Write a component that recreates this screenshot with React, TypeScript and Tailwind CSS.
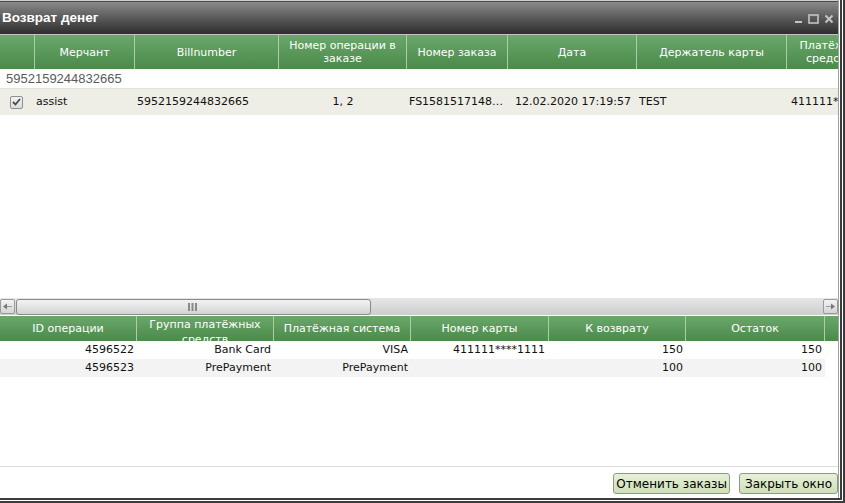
import React from "react";

const upperCols = [
    {title: "", w: "w-[35px]"},
    {title: "Мерчант", w: "w-[100px]"},
    {title: "Billnumber", w: "w-[144px]"},
    {title: "Номер операции в заказе", w: "w-[128px]"},
    {title: "Номер заказа", w: "w-[101px]"},
    {title: "Дата", w: "w-[129px]"},
    {title: "Держатель карты", w: "w-[150px]"},
    {title: "Платёжное средство", w: "w-[92px]"},
];

const lowerCols = [
    {title: "ID операции", w: "w-[137px]"},
    {title: "Группа платёжных средств", w: "w-[137px]"},
    {title: "Платёжная система", w: "w-[137px]"},
    {title: "Номер карты", w: "w-[138px]"},
    {title: "К возврату", w: "w-[137px]"},
    {title: "Остаток", w: "w-[139px]"},
];

const payments = [
    {id: "4596522", group: "Bank Card", system: "VISA", card: "411111****1111", refund: "150", rest: "150"},
    {id: "4596523", group: "PrePayment", system: "PrePayment", card: "", refund: "100", rest: "100"},
];

const HeaderCell = ({title, w, h}: { title: string; w: string; h: string }) => (
    <div
        className={`${w} ${h} shrink-0 flex items-center justify-center overflow-hidden border-r border-[#a9cfa9] px-1 text-center text-[11px] leading-[13px] text-white`}>
        <span>{title}</span>
    </div>
);

const Arrow = ({dir}: { dir: "left" | "right" }) => (
    <div
        className="w-[15px] h-[15px] shrink-0 rounded-[2px] border border-[#9a9a9a] bg-gradient-to-b from-[#f4f4f4] to-[#d4d4d4] flex items-center justify-center">
        <svg width="11" height="7" viewBox="0 0 11 7">
            {dir === "left" ? (
                <>
                    <path d="M1 3.5 L5 0.5 L5 6.5 Z" fill="#777"/>
                    <path d="M5 3.5 H10" stroke="#999" strokeWidth="1"/>
                </>
            ) : (
                <>
                    <path d="M10 3.5 L6 0.5 L6 6.5 Z" fill="#777"/>
                    <path d="M1 3.5 H6" stroke="#999" strokeWidth="1"/>
                </>
            )}
        </svg>
    </div>
);

const App = () => {
    return (
        <div
            className="w-[845px] h-[503px] overflow-hidden bg-white border-r-[5px] border-b-[5px] border-double border-[#3c3c3c] flex"
            style={{fontFamily: '"DejaVu Sans", Verdana, sans-serif'}}>
            <div className="w-[839px] h-full border-r border-[#a0a0a0] flex flex-col overflow-hidden">
                {/* title bar */}
                <div className="h-[35px] shrink-0 border-t border-[#cfcfcf] border-b border-b-[#c4c4c4]">
                    <div
                        className="h-full border-t border-[#4a4a4a] bg-gradient-to-b from-[#8a8a8a] via-[#5a5a5a] to-[#2e2e2e] flex items-center justify-between pl-[2px] pr-[4px]">
                        <span className="text-[13.5px] font-bold text-white"
                              style={{fontFamily: '"Liberation Sans", Arial, sans-serif'}}>Возврат денег</span>
                        <div className="flex items-center gap-[5px] pt-[1px]">
                            <svg width="9" height="10" viewBox="0 0 9 10">
                                <rect x="1" y="7" width="7" height="2" fill="#c4c4c4"/>
                            </svg>
                            <svg width="11" height="10" viewBox="0 0 11 10">
                                <rect x="1" y="1" width="9" height="8" fill="none" stroke="#c4c4c4" strokeWidth="1.6"/>
                            </svg>
                            <svg width="10" height="10" viewBox="0 0 10 10">
                                <path d="M1.5 1.5 L8.5 8.5 M8.5 1.5 L1.5 8.5" stroke="#c4c4c4" strokeWidth="2"/>
                            </svg>
                        </div>
                    </div>
                </div>

                {/* upper grid header */}
                <div className="h-[34px] shrink-0 flex bg-gradient-to-b from-[#6ba76b] to-[#4a8a4a]">
                    {upperCols.map((c, i) => (
                        <HeaderCell key={i} title={c.title} w={c.w} h="h-[34px]"/>
                    ))}
                </div>

                {/* upper grid body */}
                <div className="h-[229px] shrink-0 flex flex-col">
                    <div className="h-[19px] flex items-center pl-[6px] text-[13px] text-[#5a5a5a]"
                         style={{fontFamily: '"Liberation Sans", Arial, sans-serif'}}>
                        5952159244832665
                    </div>
                    <div
                        className="h-[27px] flex items-center bg-[#eeede6] border-t border-[#e2e2dc] text-[11px] text-[#111] whitespace-nowrap">
                        <div className="w-[35px] shrink-0 flex items-center pl-[10px]">
                            <div
                                className="w-[13px] h-[13px] rounded-[2px] border border-[#8e8f8f] bg-gradient-to-b from-[#f2f2f2] to-[#dcdcdc] flex items-center justify-center">
                                <svg width="9" height="8" viewBox="0 0 9 8">
                                    <path d="M1 4 L3.5 6.5 L8 1" fill="none" stroke="#3f4a5a" strokeWidth="1.8"/>
                                </svg>
                            </div>
                        </div>
                        <div className="w-[100px] shrink-0 pl-[1px]">assist</div>
                        <div className="w-[144px] shrink-0 pl-[2px]">5952159244832665</div>
                        <div className="w-[128px] shrink-0 text-center">1, 2</div>
                        <div className="w-[101px] shrink-0 pl-[2px] pr-[4px] overflow-hidden text-ellipsis">FS1581517148123</div>
                        <div className="w-[129px] shrink-0 pl-[7px] overflow-hidden">12.02.2020 17:19:57</div>
                        <div className="w-[150px] shrink-0 pl-[2px]">TEST</div>
                        <div className="w-[92px] shrink-0 pl-[4px]">411111****1111</div>
                    </div>
                </div>

                {/* horizontal scrollbar */}
                <div
                    className="h-[17px] shrink-0 flex items-center bg-gradient-to-b from-[#e6e6e6] to-[#cdcdcd]">
                    <Arrow dir="left"/>
                    <div
                        className="w-[355px] h-[16px] ml-[1px] rounded-[3px] border border-[#8a8a8a] bg-gradient-to-b from-[#f2f2f2] via-[#e4e4e4] to-[#d2d2d2] flex items-center justify-center pr-[2px]">
                        <svg width="9" height="8" viewBox="0 0 9 8">
                            <rect x="0" y="0" width="2" height="8" fill="#8a8a8a"/>
                            <rect x="3.5" y="0" width="2" height="8" fill="#8a8a8a"/>
                            <rect x="7" y="0" width="2" height="8" fill="#8a8a8a"/>
                        </svg>
                    </div>
                    <div className="flex-1"/>
                    <Arrow dir="right"/>
                </div>

                {/* lower grid header */}
                <div className="h-[25px] shrink-0 mt-[1px] flex bg-gradient-to-b from-[#6ba76b] to-[#4a8a4a]">
                    {lowerCols.map((c, i) => (
                        <div key={i}
                             className={`${c.w} h-[25px] shrink-0 overflow-hidden border-r border-[#a9cfa9] px-1 text-center text-[11px] text-white ${i === 1 ? "pt-[1px] leading-[15px]" : "leading-[13px] flex items-center justify-center"}`}>
                            <span>{c.title}</span>
                        </div>
                    ))}
                </div>

                {/* lower grid body */}
                <div className="flex-1 flex flex-col text-[11px] text-[#111]">
                    {payments.map((p, i) => (
                        <div key={p.id}
                             className={`h-[18px] w-[825px] flex items-center whitespace-nowrap ${i % 2 ? "bg-[#f3f3f3]" : "bg-white"}`}>
                            <div className="w-[137px] shrink-0 text-right pr-[3px]">{p.id}</div>
                            <div className="w-[137px] shrink-0 text-right pr-[3px]">{p.group}</div>
                            <div className="w-[137px] shrink-0 text-right pr-[3px]">{p.system}</div>
                            <div className="w-[138px] shrink-0 text-right pr-[4px]">{p.card}</div>
                            <div className="w-[137px] shrink-0 text-right pr-[3px]">{p.refund}</div>
                            <div className="w-[139px] shrink-0 text-right pr-[3px]">{p.rest}</div>
                        </div>
                    ))}
                </div>

                {/* footer */}
                <div className="h-[32px] shrink-0 border-t border-[#dcdcdc] flex items-start justify-end gap-[9px] pt-[6px]">
                    <button
                        className="h-[21px] px-[2px] rounded-[3px] border border-[#8c9c80] bg-gradient-to-b from-[#e6f0d8] to-[#cfe0b8] text-[12px] text-black leading-none">
                        Отменить заказы
                    </button>
                    <button
                        className="h-[21px] px-[5px] rounded-[3px] border border-[#8c9c80] bg-gradient-to-b from-[#e6f0d8] to-[#cfe0b8] text-[12px] text-black leading-none">
                        Закрыть окно
                    </button>
                </div>
            </div>
        </div>
    );
};

export default App;
